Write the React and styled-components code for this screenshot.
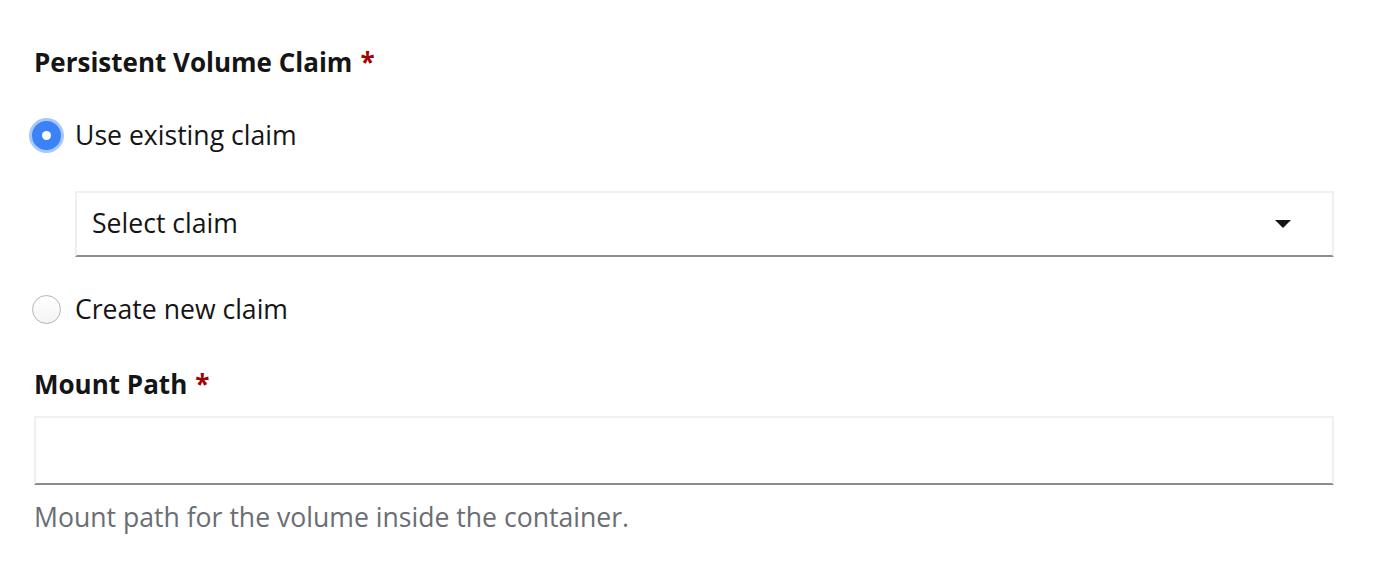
import React from "react";
import styled, { createGlobalStyle } from "styled-components";

const GlobalStyle = createGlobalStyle`
  html, body {
    margin: 0;
    padding: 0;
    background: #ffffff;
  }
  body {
    font-family: "Open Sans", "Liberation Sans", sans-serif;
    color: #151515;
  }
`;

const Form = styled.div`
  display: flex;
  flex-direction: column;
  padding: 44px 50px 0 34px;
`;

const Label = styled.div`
  font-size: 26px;
  line-height: 36px;
  font-weight: 700;
  color: #151515;
  margin-top: ${(p) => p.$top || 0}px;
  .req {
    color: #a30000;
    margin-left: 8px;
  }
`;

const RadioRow = styled.label`
  display: flex;
  align-items: center;
  height: 36px;
  margin-top: ${(p) => p.$top || 0}px;
  font-size: 26.6px;
  cursor: pointer;
`;

const RadioDot = styled.span`
  box-sizing: border-box;
  width: 29px;
  height: 29px;
  margin-left: -2px;
  margin-right: 14px;
  border-radius: 50%;
  display: flex;
  justify-content: center;
  align-items: center;
  ${(p) =>
    p.$checked
      ? `
    background: #3b82f6;
    box-shadow: 0 0 0 3px rgba(59, 130, 246, 0.45);
    &::after {
      content: "";
      width: 9px;
      height: 9px;
      border-radius: 50%;
      background: #ffffff;
    }
  `
      : `
    background: linear-gradient(#ffffff, #f4f4f4);
    border: 1.5px solid #b4b4b4;
  `}
`;

const Nested = styled.div`
  margin-top: 38px;
  padding-left: 41px;
`;

const SelectBox = styled.div`
  box-sizing: border-box;
  height: 66px;
  display: flex;
  align-items: center;
  justify-content: space-between;
  padding: 0 41px 3px 15px;
  border: 2px solid #f0f0f0;
  border-bottom-color: #8a8d90;
  font-size: 26.6px;
  color: #151515;
`;

const Caret = styled.span`
  margin-top: 3px;
  width: 0;
  height: 0;
  border-left: 8px solid transparent;
  border-right: 8px solid transparent;
  border-top: 8px solid #151515;
`;

const TextInput = styled.div`
  box-sizing: border-box;
  height: 69px;
  margin-top: 14px;
  border: 2px solid #f0f0f0;
  border-bottom-color: #8a8d90;
`;

const Helper = styled.div`
  margin-top: 14px;
  font-size: 26.6px;
  line-height: 36px;
  color: #6a6e73;
`;

export default function App() {
  return (
    <>
      <GlobalStyle />
      <Form>
        <Label>
          Persistent Volume Claim<span className="req">*</span>
        </Label>
        <RadioRow $top={37}>
          <RadioDot $checked />
          Use existing claim
        </RadioRow>
        <Nested>
          <SelectBox>
            Select claim
            <Caret />
          </SelectBox>
        </Nested>
        <RadioRow $top={34}>
          <RadioDot />
          Create new claim
        </RadioRow>
        <Label $top={39}>
          Mount Path<span className="req">*</span>
        </Label>
        <TextInput />
        <Helper>Mount path for the volume inside the container.</Helper>
      </Form>
    </>
  );
}
